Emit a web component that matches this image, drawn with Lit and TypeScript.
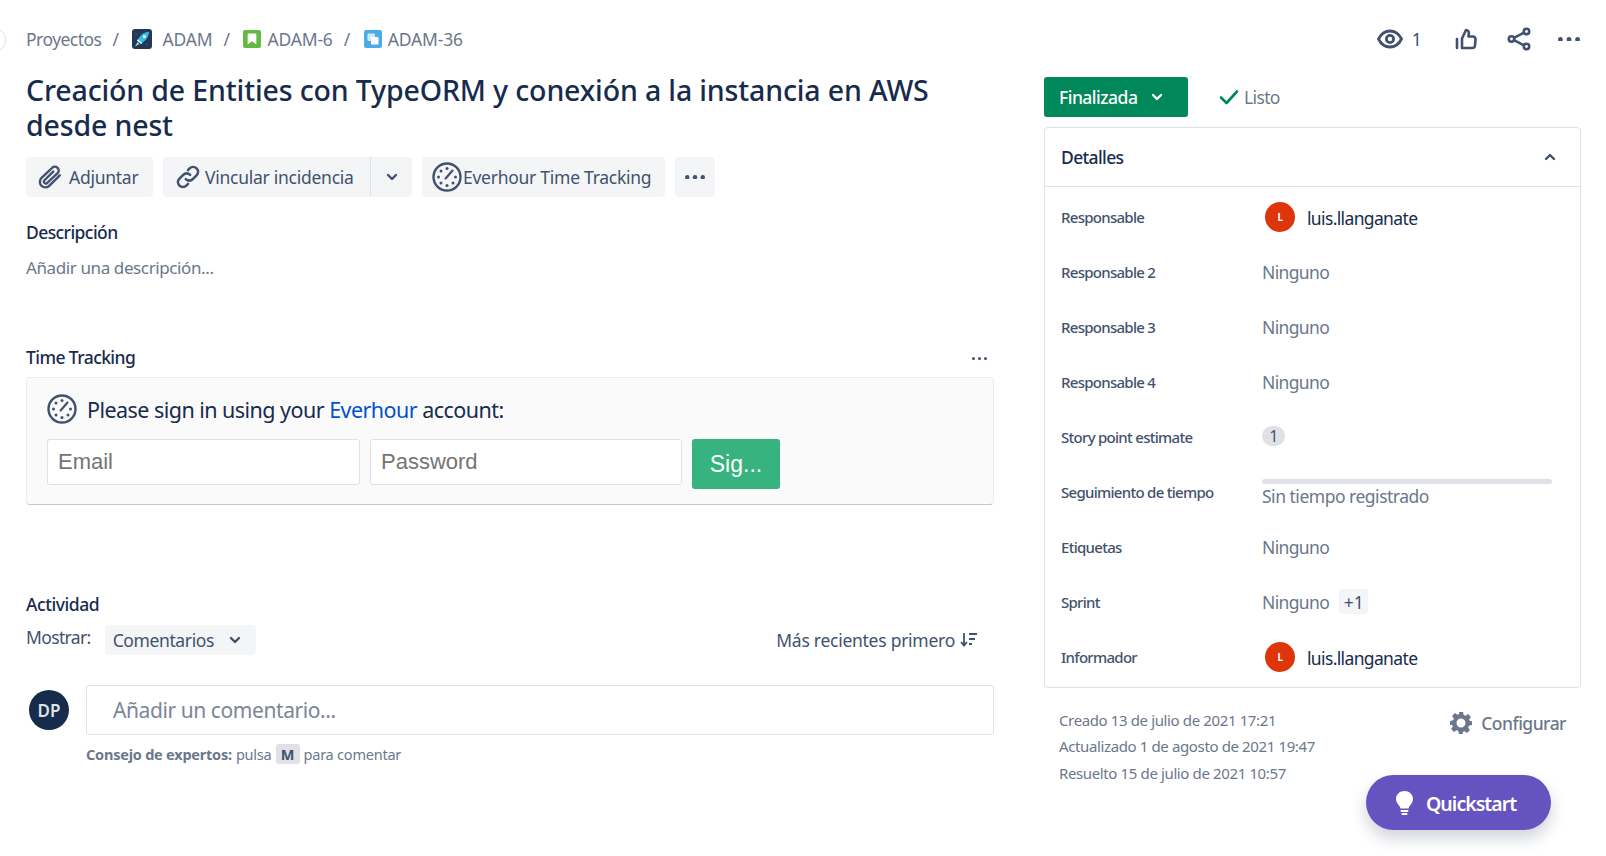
import { LitElement, css, html, nothing } from 'lit';
import { customElement } from 'lit/decorators.js';

// Everhour clock face, used in the toolbar and in the sign-in panel
const clockIcon = (size: number) => html`
	<svg width=${size} height=${size} viewBox="0 0 30 30" fill="none">
		<circle cx="15" cy="15" r="13.5" stroke="#42526e" stroke-width="2.4"/>
		<g fill="#42526e">
			<circle cx="15" cy="6.5" r="1.5"/><circle cx="9" cy="9" r="1.5"/><circle cx="6.5" cy="15" r="1.5"/>
			<circle cx="9" cy="21" r="1.5"/><circle cx="15" cy="23.5" r="1.5"/><circle cx="21" cy="21" r="1.5"/>
			<circle cx="23.5" cy="15" r="1.5"/>
		</g>
		<path d="M13.6 16.4 20.5 8.6" stroke="#42526e" stroke-width="2.2" stroke-linecap="round"/>
	</svg>`;

const chevron = (up = false) => html`
	<svg class="chev" width="12" height="8" viewBox="0 0 12 8" fill="none">
		<path d=${up ? 'M2 6l4-4 4 4' : 'M2 2l4 4 4-4'} stroke="currentColor" stroke-width="2.4" stroke-linecap="round" stroke-linejoin="round"/>
	</svg>`;

const dots = (w: number, r: number) => html`
	<svg width=${w} height=${r * 2} viewBox="0 0 ${w} ${r * 2}" fill="#42526e">
		<circle cx=${r} cy=${r} r=${r}/><circle cx=${w / 2} cy=${r} r=${r}/><circle cx=${w - r} cy=${r} r=${r}/>
	</svg>`;

const rows = [
	{ label: 'Responsable', user: 'luis.llanganate' },
	{ label: 'Responsable 2', text: 'Ninguno' },
	{ label: 'Responsable 3', text: 'Ninguno' },
	{ label: 'Responsable 4', text: 'Ninguno' },
	{ label: 'Story point estimate', badge: '1' },
	{ label: 'Seguimiento de tiempo', track: 'Sin tiempo registrado' },
	{ label: 'Etiquetas', text: 'Ninguno' },
	{ label: 'Sprint', text: 'Ninguno', more: '+1' },
	{ label: 'Informador', user: 'luis.llanganate' },
];

@customElement('app-root')
export class AppRoot extends LitElement {
	static styles = css`
		:host {
			display: block;
			position: relative;
			height: 856px;
			overflow: hidden;
			background: #fff;
			font-family: 'Noto Sans', sans-serif;
			color: #172b4d;
			letter-spacing: -0.04em;
		}
		.page {
			display: grid;
			grid-template-columns: 968px 537px;
			gap: 50px;
			padding-left: 26px;
		}
		.edge {
			position: absolute;
			left: -20px;
			top: 27px;
			width: 24px;
			height: 24px;
			border-radius: 50%;
			border: 1px solid #dfe1e6;
		}
		.crumbs {
			display: flex;
			align-items: center;
			height: 28px;
			margin-top: 25px;
			font-size: 17.5px;
			color: #6b778c;
			letter-spacing: -0.03em;
		}
		.crumbs .id { letter-spacing: -0.01em; }
		.crumbs .sep { margin: 0 14px 0 11px; }
		.crumbs svg { display: block; margin-right: 6px; }
		.crumbs svg.proj { margin-right: 10px; }
		h1 {
			margin: 20px 0 0;
			font-size: 28.5px;
			line-height: 35px;
			font-weight: 500;
			letter-spacing: -0.005em;
		}
		.toolbar {
			display: flex;
			gap: 10px;
			margin-top: 14px;
		}
		.btn {
			display: flex;
			align-items: center;
			height: 40px;
			background: #f4f5f7;
			border-radius: 4px;
			font-size: 17.5px;
			color: #42526e;
			box-sizing: border-box;
			letter-spacing: -0.015em;
		}
		.btn.attach { width: 127px; padding-left: 11px; gap: 6px; }
		.btn.link { width: 208px; padding-left: 12px; gap: 4px; border-right: 1px solid #dfe1e6; border-radius: 4px 0 0 4px; }
		.btn.caret { width: 41px; margin-left: -10px; justify-content: center; border-radius: 0 4px 4px 0; }
		.btn.ever { width: 243px; padding-left: 10px; gap: 1px; }
		.btn.more { width: 40px; justify-content: center; }
		h2 {
			margin: 0;
			font-size: 17.5px;
			line-height: 24px;
			font-weight: 500;
			letter-spacing: -0.033em;
		}
		.desc-title { margin-top: 23px; }
		.desc {
			margin-top: 12px;
			font-size: 17px;
			line-height: 24px;
			color: #6b778c;
			letter-spacing: -0.023em;
		}
		.tt-head {
			display: flex;
			justify-content: space-between;
			align-items: center;
			margin-top: 66px;
			padding-right: 7px;
		}
		.tt-head h2 { margin: -1px 0 1px; }
		.panel {
			margin-top: 7px;
			height: 128px;
			box-sizing: border-box;
			padding: 15px 20px 0;
			background: #fafafa;
			border: 1px solid #ebecf0;
			border-bottom: 1px solid #c1c7d0;
			border-radius: 4px;
		}
		.panel .sign {
			display: flex;
			align-items: center;
			gap: 10px;
			height: 32px;
			font-size: 21.5px;
			letter-spacing: -0.025em;
		}
		.panel a { color: #0052cc; text-decoration: none; }
		.form {
			display: flex;
			gap: 10px;
			margin-top: 14px;
			align-items: flex-start;
		}
		.form input {
			height: 46px;
			box-sizing: border-box;
			padding: 0 10px;
			border: 1px solid #dfe1e6;
			border-radius: 3px;
			background: #fff;
			font: 22px 'Liberation Sans', sans-serif;
			letter-spacing: 0;
		}
		.form input.email { width: 313px; }
		.form input.pass { width: 312px; }
		.form input::placeholder { color: #757575; opacity: 1; }
		.form .go {
			width: 88px;
			height: 50px;
			display: flex;
			align-items: center;
			justify-content: center;
			background: #36b37e;
			border-radius: 3px;
			color: #fff;
			font: 23px 'Liberation Sans', sans-serif;
			letter-spacing: 0;
		}
		.activity { margin-top: 87px; letter-spacing: -0.025em; }
		.show {
			display: flex;
			align-items: center;
			justify-content: space-between;
			margin-top: 9px;
			height: 30px;
			padding-right: 16px;
		}
		.show .left { display: flex; align-items: center; gap: 14px; }
		.show .lbl { font-size: 17.5px; margin-top: -6px; color: #42526e; }
		.filter {
			display: flex;
			align-items: center;
			justify-content: space-between;
			width: 151px;
			height: 30px;
			padding: 0 15px 0 8px;
			box-sizing: border-box;
			background: #f4f5f7;
			border-radius: 4px;
			font-size: 17.5px;
			color: #42526e;
			letter-spacing: -0.022em;
		}
		.sort { display: flex; align-items: center; gap: 5px; font-size: 17.5px; color: #42526e; letter-spacing: -0.015em; }
		.comment {
			display: flex;
			gap: 17px;
			margin-top: 30px;
			padding-left: 3px;
		}
		.me {
			flex: none;
			width: 40px;
			height: 40px;
			margin-top: 5px;
			border-radius: 50%;
			background: #172b4d;
			color: #dfe1e6;
			display: flex;
			align-items: center;
			justify-content: center;
			font-size: 17px;
			font-weight: 600;
			letter-spacing: 0;
		}
		.field {
			flex: 1;
			height: 50px;
			box-sizing: border-box;
			padding-left: 26px;
			display: flex;
			align-items: center;
			border: 1px solid #dfe1e6;
			border-radius: 3px;
			font-size: 21px;
			color: #7a869a;
			letter-spacing: -0.02em;
		}
		.hint {
			display: flex;
			align-items: center;
			height: 20px;
			margin: 9px 0 0 60px;
			font-size: 14.5px;
			color: #6b778c;
			letter-spacing: -0.015em;
		}
		.hint b { font-weight: 700; margin-right: 4px; }
		.hint kbd {
			margin: 0 4px;
			width: 24px;
			height: 20px;
			display: flex;
			align-items: center;
			justify-content: center;
			background: #dfe1e6;
			border-radius: 3px;
			font: 700 14.5px 'Noto Sans', sans-serif;
			color: #42526e;
		}
		.actions {
			display: flex;
			align-items: center;
			justify-content: flex-end;
			height: 28px;
			margin-top: 25px;
			padding-right: 1px;
			color: #42526e;
			font-size: 17.5px;
		}
		.actions svg { display: block; }
		.actions .count { margin: 0 34px 0 9px; }
		.actions .like { margin-right: 30px; }
		.actions .share { margin-right: 27px; }
		.status {
			display: flex;
			align-items: center;
			gap: 31px;
			margin-top: 24px;
		}
		.final {
			display: flex;
			align-items: center;
			gap: 14px;
			width: 144px;
			height: 40px;
			box-sizing: border-box;
			padding-left: 15px;
			background: #00875a;
			border-radius: 3px;
			color: #fff;
			font-size: 17.5px;
			font-weight: 500;
			letter-spacing: -0.03em;
		}
		.done { display: flex; align-items: center; gap: 5px; font-size: 17.5px; color: #6b778c; }
		.card {
			margin-top: 10px;
			border: 1px solid #dfe1e6;
			border-radius: 4px;
			height: 561px;
			box-sizing: border-box;
		}
		.card-head {
			display: flex;
			align-items: center;
			justify-content: space-between;
			height: 59px;
			padding: 0 24px 0 16px;
			border-bottom: 1px solid #dfe1e6;
			box-sizing: border-box;
			font-size: 17.5px;
			font-weight: 500;
			color: #42526e;
		}
		.card-head span { color: #172b4d; }
		.card-body { padding-top: 2px; }
		.row {
			display: grid;
			grid-template-columns: 201px 1fr;
			align-items: center;
			height: 55px;
			padding-left: 16px;
		}
		.row .name { font-size: 15px; font-weight: 500; color: #42526e; letter-spacing: -0.048em; }
		.val { font-size: 17.5px; color: #6b778c; display: flex; align-items: center; }
		.user { color: #172b4d; gap: 12px; padding-left: 3px; }
		.user .who { margin-top: 2px; }
		.ava {
			width: 30px;
			height: 30px;
			border-radius: 50%;
			background: #de350b;
			color: #fff;
			font-size: 10px;
			font-weight: 700;
			display: flex;
			align-items: center;
			justify-content: center;
		}
		.badge {
			width: 23px;
			height: 20px;
			border-radius: 10px;
			background: #dfe1e6;
			display: flex;
			align-items: center;
			justify-content: center;
			font-size: 16px;
			color: #42526e;
			margin-top: -1px;
		}
		.plus {
			margin-left: 10px;
			width: 29px;
			height: 25px;
			background: #f4f5f7;
			border-radius: 3px;
			display: flex;
			align-items: center;
			justify-content: center;
			color: #42526e;
			letter-spacing: 0;
		}
		.track { display: flex; flex-direction: column; padding-top: 3px; width: 290px; }
		.track i { display: block; height: 5px; border-radius: 3px; background: #dfe1e6; }
		.track span { font-size: 17.5px; line-height: 24px; color: #6b778c; letter-spacing: -0.028em; }
		.foot {
			display: flex;
			justify-content: space-between;
			padding: 19px 15px 0 15px;
		}
		.meta { font-size: 15px; line-height: 26.4px; color: #6b778c; letter-spacing: -0.025em; }
		.conf { display: flex; align-items: center; gap: 8px; height: 34px; margin-top: -1px; font-size: 17.5px; font-weight: 500; color: #6b778c; letter-spacing: -0.03em; }
		.quick {
			position: absolute;
			left: 1366px;
			top: 775px;
			width: 185px;
			height: 55px;
			box-sizing: border-box;
			padding: 1px 0 0 30px;
			display: flex;
			align-items: center;
			gap: 13px;
			border-radius: 28px;
			background: #6554c0;
			color: #fff;
			font-size: 19.5px;
			font-weight: 600;
			letter-spacing: -0.05em;
			box-shadow: 0 8px 16px rgba(9, 30, 66, 0.2);
		}
	`;

	renderRow(r: any) {
		let value: unknown = nothing;
		if (r.user) {
			value = html`<div class="val user"><span class="ava">L</span><span class="who">${r.user}</span></div>`;
		} else if (r.badge) {
			value = html`<div class="val"><span class="badge">${r.badge}</span></div>`;
		} else if (r.track) {
			value = html`<div class="track"><i></i><span>${r.track}</span></div>`;
		} else {
			value = html`<div class="val">${r.text}${r.more ? html`<span class="plus">${r.more}</span>` : nothing}</div>`;
		}
		return html`<div class="row"><div class="name">${r.label}</div>${value}</div>`;
	}

	render() {
		return html`
		<div class="edge"></div>
		<div class="page">
			<div>
				<nav class="crumbs">
					Proyectos<span class="sep">/</span>
					<svg class="proj" width="20" height="20" viewBox="0 0 20 20">
						<rect width="20" height="20" rx="3" fill="#253858"/>
						<path d="M3 17.500 5.500 13l2 2z" fill="#79e2f2"/>
						<path d="M5 11.500 8 7.500C10 5 13 3 17 2.800c0 4-2 7-4.500 9.200L9 15z" fill="#2ebfe6"/>
						<path d="M5 11.500 9 15l1.200-.9L6 10.200z" fill="#fff"/>
						<circle cx="12.500" cy="7.500" r="1.500" fill="#fff"/>
						<circle cx="15" cy="15" r=".6" fill="#7a869a"/><circle cx="4" cy="5" r=".6" fill="#7a869a"/>
					</svg>
					<span class="id">ADAM</span><span class="sep">/</span>
					<svg width="18" height="18" viewBox="0 0 18 18">
						<rect width="18" height="18" rx="2" fill="#65ba43"/>
						<path d="M5.500 3.500h7a.8.8 0 0 1 .8.8v10l-4.300-3-4.300 3v-10a.8.8 0 0 1 .8-.8z" fill="#fff"/>
					</svg>
					<span class="id">ADAM-6</span><span class="sep">/</span>
					<svg width="18" height="18" viewBox="0 0 18 18">
						<rect width="18" height="18" rx="2" fill="#4bade8"/>
						<rect x="3.500" y="3.500" width="7.500" height="7.500" rx="1.200" fill="#fff" opacity=".75"/>
						<rect x="7" y="7" width="7.500" height="7.500" rx="1.200" fill="#fff"/>
					</svg>
					<span class="id">ADAM-36</span>
				</nav>
				<h1>Creación de Entities con TypeORM y conexión a la instancia en AWS desde nest</h1>
				<div class="toolbar">
					<div class="btn attach">
						<svg width="26" height="26" viewBox="0 0 24 24" fill="none" stroke="#42526e" stroke-width="2.2" stroke-linecap="round">
							<path d="M21 10.500 11.500 20a5 5 0 0 1-7.500-7L14 3.500a3.500 3.500 0 0 1 5 5L9.500 17.500a1.800 1.800 0 0 1-2.600-2.500L15 7"/>
						</svg>
						Adjuntar
					</div>
					<div class="btn link">
						<svg width="26" height="26" viewBox="0 0 24 24" fill="none" stroke="#42526e" stroke-width="2.4" stroke-linecap="round">
							<path d="M10 14a4.500 4.500 0 0 0 6.400 0l3.500-3.500a4.500 4.500 0 0 0-6.400-6.400l-1.500 1.500"/>
							<path d="M14 10a4.500 4.500 0 0 0-6.400 0l-3.500 3.500a4.500 4.500 0 0 0 6.400 6.400l1.500-1.500"/>
						</svg>
						Vincular incidencia
					</div>
					<div class="btn caret">${chevron()}</div>
					<div class="btn ever">${clockIcon(30)}Everhour Time Tracking</div>
					<div class="btn more">${dots(20, 2.2)}</div>
				</div>

				<h2 class="desc-title">Descripción</h2>
				<div class="desc">Añadir una descripción...</div>

				<div class="tt-head"><h2>Time Tracking</h2>${dots(15, 1.5)}</div>
				<div class="panel">
					<div class="sign">${clockIcon(30)}<span>Please sign in using your <a>Everhour</a> account:</span></div>
					<div class="form">
						<input class="email" placeholder="Email" />
						<input class="pass" placeholder="Password" />
						<div class="go">Sig...</div>
					</div>
				</div>

				<h2 class="activity">Actividad</h2>
				<div class="show">
					<div class="left">
						<span class="lbl">Mostrar:</span>
						<div class="filter">Comentarios ${chevron()}</div>
					</div>
					<div class="sort">Más recientes primero
						<svg width="18" height="16" viewBox="0 0 18 16" fill="none" stroke="#42526e" stroke-width="1.800">
							<path d="M4 1v12M1 10l3 3.500L7 10"/><path d="M9 2h8M9 7h6M9 12h3"/>
						</svg>
					</div>
				</div>
				<div class="comment">
					<div class="me">DP</div>
					<div class="field">Añadir un comentario...</div>
				</div>
				<div class="hint"><b>Consejo de expertos:</b> pulsa <kbd>M</kbd> para comentar</div>
			</div>

			<div>
				<div class="actions">
					<svg width="26" height="20" viewBox="0 0 26 20" fill="none" stroke="#42526e" stroke-width="2.800">
						<path d="M1.500 10C4 5 8 2 13 2s9 3 11.500 8C22 15 18 18 13 18S4 15 1.500 10z"/>
						<circle cx="13" cy="10" r="3.600"/>
					</svg>
					<span class="count">1</span>
					<svg class="like" width="22" height="22" viewBox="0 0 22 22" fill="none" stroke="#42526e" stroke-width="2.600" stroke-linejoin="round" stroke-linecap="round">
						<path d="M2 11v9M7 20V10.500l4-8.500c2 0 3 1.500 2.800 3.500L13.500 8.500H18a2.500 2.500 0 0 1 2.500 2.700L20 17.500a2.700 2.700 0 0 1-2.700 2.500z"/>
					</svg>
					<svg class="share" width="24" height="24" viewBox="0 0 24 24" fill="none" stroke="#42526e" stroke-width="2.600">
						<circle cx="19.500" cy="4.500" r="2.700"/><circle cx="4.500" cy="12" r="2.700"/><circle cx="19.500" cy="19.500" r="2.700"/>
						<path d="M7 10.800 17 5.700M7 13.200 17 18.300"/>
					</svg>
					${dots(22, 2.4)}
				</div>
				<div class="status">
					<div class="final">Finalizada ${chevron()}</div>
					<div class="done">
						<svg width="20" height="16" viewBox="0 0 20 16" fill="none" stroke="#00875a" stroke-width="2.600" stroke-linecap="round" stroke-linejoin="round">
							<path d="M2 8.500 7.500 14 18 2.500"/>
						</svg>
						Listo
					</div>
				</div>
				<section class="card">
					<div class="card-head"><span>Detalles</span>${chevron(true)}</div>
					<div class="card-body">${rows.map((r) => this.renderRow(r))}</div>
				</section>
				<div class="foot">
					<div class="meta">
						<div>Creado 13 de julio de 2021 17:21</div>
						<div>Actualizado 1 de agosto de 2021 19:47</div>
						<div>Resuelto 15 de julio de 2021 10:57</div>
					</div>
					<div class="conf">
						<svg width="24" height="24" viewBox="0 0 24 24" fill="#6b778c" fill-rule="evenodd">
							<path d="M10 1h4l.7 3.100 1.700.7 2.700-1.700 2.800 2.800-1.700 2.700.7 1.700L23 10v4l-3.100.7-.7 1.700 1.700 2.700-2.800 2.800-2.700-1.700-1.700.7L14 23h-4l-.7-3.100-1.700-.7-2.700 1.700-2.800-2.800 1.700-2.700-.7-1.700L1 14v-4l3.100-.7.7-1.700-1.700-2.700 2.800-2.800 2.700 1.700 1.700-.7zM12 7.500a4.500 4.500 0 1 0 0 9 4.500 4.500 0 0 0 0-9z"/>
						</svg>
						Configurar
					</div>
				</div>
			</div>
		</div>
		<div class="quick">
			<svg width="17" height="24" viewBox="0 0 17 24" fill="#fff">
				<path d="M8.500 0C3.800 0 0 3.500 0 8c0 3 1.700 5 3 6.500.8 1 1.300 2 1.500 3h8c.2-1 .7-2 1.500-3C15.300 13 17 11 17 8c0-4.500-3.800-8-8.500-8z"/>
				<rect x="4.500" y="19" width="8" height="2" rx="1"/><rect x="5.500" y="22" width="6" height="2" rx="1"/>
			</svg>
			Quickstart
		</div>
		`;
	}
}

declare global {
	interface HTMLElementTagNameMap {
		'app-root': AppRoot;
	}
}
